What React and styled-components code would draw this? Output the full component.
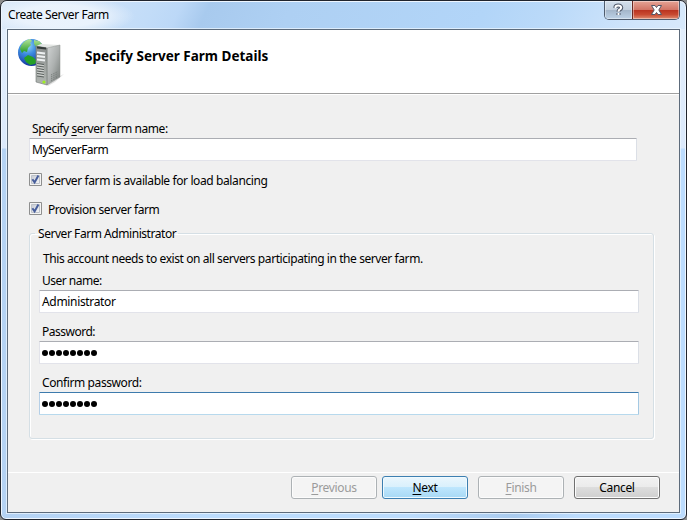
import React from "react";
import styled, { createGlobalStyle, css } from "styled-components";

const GlobalStyle = createGlobalStyle`
  *, *::before, *::after { box-sizing: border-box; }
  body { margin: 0; background: #8c8c8c; overflow: hidden; }
`;

const Window = styled.main`
  width: 687px;
  height: 520px;
  display: flex;
  flex-direction: column;
  padding: 0 6px 6px 5px;
  border: 1px solid #20242d;
  border-radius: 7px 7px 6px 6px;
  box-shadow: inset 0 0 0 1px #eef6ff;
  background:
    linear-gradient(#e4effc 0, #dbe9fb 147px, transparent 148px),
    linear-gradient(90deg, #b4d2f3, #bcdcfd 30%, #bcdcfd 60%, #aacbee 75%, #bcdcfe 84%);
  font-family: "Noto Sans", "Open Sans", sans-serif;
  font-size: 12px;
  line-height: 16px;
  color: #000;
`;

const TitleBar = styled.header`
  height: 28px;
  flex: none;
  display: flex;
  justify-content: space-between;
  margin: 0 -5px 0 -4px;
  padding: 1px 5px 0 6px;
  border-top: 1px solid #eef6ff;
  border-radius: 6px 6px 0 0;
  background:
    radial-gradient(ellipse 75px 20px at 58px 14px, rgba(238, 245, 253, 0.85) 55%, rgba(238, 245, 253, 0)),
    linear-gradient(115deg, #dbe9f9 0, #c2dcf8 22%, #bcd8f7 26%, #a8caee 30%, #aed0f3 42%, #b2d5f8 70%, #bbdaf9 80%, #cfe4fb 92%, #d8e9fb 100%);
`;

const Text = styled.span`
  white-space: nowrap;
  letter-spacing: ${(p) => p.$track || 0}px;
`;

const Title = styled(Text)`
  padding-top: 4px;
`;

const Captions = styled.div`
  display: flex;
  height: 19px;
  margin-top: -2px;
  border: 1px solid #4f5c6e;
  border-top: 0;
  border-radius: 0 0 5px 5px;
  overflow: hidden;
`;

const Caption = styled.button`
  width: ${(p) => (p.$close ? 47 : 27)}px;
  padding: 0;
  border: 0;
  display: flex;
  align-items: center;
  justify-content: center;
  box-shadow: inset 0 0 0 1px rgba(255, 255, 255, 0.4);
  background: linear-gradient(#d3dfec, #c3d0df 48%, #a3b5c9 50%, #bdd2e7);
  ${(p) => p.$close && css`
    border-left: 1px solid #6d2922;
    background: linear-gradient(#e5a496, #d27566 48%, #b9321f 50%, #c84a31 75%, #df8d72);
  `}
`;

const Client = styled.section`
  flex: 1;
  min-height: 0;
  display: flex;
  flex-direction: column;
  border: 1px solid #5d6b7b;
  outline: 1px solid rgba(240, 248, 255, 0.7);
  margin: 0 0 0 1px;
  background: #f0f0f0;
`;

const Banner = styled.div`
  height: 64px;
  flex: none;
  display: flex;
  align-items: flex-start;
  background: #fff;
  border-bottom: 1px solid #a0a0a0;
  box-shadow: 0 1px #fff;
`;

const FarmIcon = styled.svg`
  width: 48px;
  height: 50px;
  margin: 7px 0 0 9px;
`;

const Heading = styled.h1`
  margin: 17px 0 0 20px;
  font-size: 13.5px;
  line-height: 18px;
  font-weight: 700;
  white-space: nowrap;
`;

const Body = styled.div`
  flex: 1;
  display: flex;
  flex-direction: column;
  padding: 27px 25px 0 21px;
`;

const Label = styled.label`
  display: block;
  height: 16px;
  margin: 0 0 1px 3px;
  white-space: nowrap;
  letter-spacing: ${(p) => p.$track || 0}px;
`;

const Mnemonic = styled.span`
  text-decoration: underline;
  text-decoration-skip-ink: none;
  text-underline-offset: 2px;
`;

const Input = styled.div`
  width: ${(p) => p.$width}px;
  height: 23px;
  flex: none;
  display: flex;
  align-items: center;
  padding: 0 2px;
  background: #fff;
  border: 1px solid #e2e3ea;
  border-top-color: #abadb3;
  border-right-color: #dbdfe6;
  border-radius: 1px;
  ${(p) => p.$focused && css`
    border-color: #3d7bad #a4c9e3 #b7d9ed #b5cfe7;
  `}
`;

const DotRow = styled.span`
  display: flex;
  gap: 1px;
`;

const Dot = styled.i`
  width: 6px;
  height: 6px;
  border-radius: 50%;
  background: #000;
`;

const CheckRow = styled.div`
  display: flex;
  align-items: flex-start;
  gap: 6px;
  height: 16px;
  margin-top: ${(p) => p.$top}px;
`;

const CheckBox = styled.svg`
  width: 13px;
  height: 13px;
  flex: none;
`;

const Group = styled.fieldset`
  width: 625px;
  height: 214px;
  min-width: 0;
  margin: 7px 0 0;
  padding: 10px 9px 0;
  border: 1px solid #d5dfe5;
  border-radius: 3px;
  box-shadow: inset 1px 1px #fff, 1px 1px #fff;
`;

const Legend = styled.legend`
  height: 16px;
  line-height: 18px;
  padding: 0 2px 0 3px;
  margin-left: -4px;
`;

const Field = styled.div`
  margin-bottom: 11px;
`;

const Note = styled.p`
  height: 16px;
  margin: 0 0 6px 4px;
`;

const Footer = styled.footer`
  height: 40px;
  flex: none;
  display: flex;
  padding: 3px 19px 0 283px;
  border-top: 1px solid #fff;
`;

const Button = styled.button`
  width: 86px;
  height: 23px;
  margin-right: ${(p) => p.$gap || 0}px;
  flex: none;
  padding: 0;
  font: inherit;
  letter-spacing: -0.35px;
  border-radius: 3px;
  border: 1px solid #707070;
  box-shadow: inset 0 0 0 1px #fcfcfc;
  color: #000;
  background: linear-gradient(#f2f2f2, #ebebeb 49%, #dddddd 50%, #cfcfcf);
  ${(p) => p.$primary && css`
    border-color: #3c7fb1;
    box-shadow: inset 0 0 0 1px #effaff;
    background: linear-gradient(#eaf6fd, #d9f0fc 49%, #bee6fd 50%, #a7d9f5);
  `}
  ${(p) => p.disabled && css`
    border-color: #adb2b5;
    background: #f4f4f4;
    color: #9b9b9b;
  `}
`;

function ServerFarmIcon() {
  return (
    <FarmIcon viewBox="0 0 48 50">
      <defs>
        <radialGradient id="globe" cx=".35" cy=".25" r=".8">
          <stop offset="0" stopColor="#9bdcf5" />
          <stop offset=".4" stopColor="#3b8be0" />
          <stop offset="1" stopColor="#102c98" />
        </radialGradient>
        <linearGradient id="side" x1="0" y1="0" x2="1" y2="1">
          <stop offset="0" stopColor="#d2d5d5" />
          <stop offset=".5" stopColor="#adb1b0" />
          <stop offset="1" stopColor="#737976" />
        </linearGradient>
        <linearGradient id="front" x1="0" y1="0" x2="0" y2="1">
          <stop offset="0" stopColor="#8b8f8e" />
          <stop offset="1" stopColor="#b0b5b1" />
        </linearGradient>
        <linearGradient id="land" x1="0" y1="0" x2="0" y2="1">
          <stop offset="0" stopColor="#b4e49a" />
          <stop offset="1" stopColor="#249927" />
        </linearGradient>
      </defs>
      <path d="M30 48l13-9 4-2-9 8-7 4z" fill="#888" opacity=".25" />
      <circle cx="14.5" cy="15.5" r="13.5" fill="url(#globe)" />
      <path d="M3 12c1-5 5-9 10-10l2 2-2 2 1 2-3 3-1 4-3-1-2 2zM17 3l5 1 3 3-2 4-4-1-2-3z" fill="url(#land)" />
      <path d="M7 21l4-3 5 2 4 4-2 3-5 1-4-3z" fill="#25a027" />
      <path d="M19 9l5-2 19 1-12 3z" fill="#e3e6e4" />
      <path d="M30 11l13-3v32L30 48z" fill="url(#side)" stroke="#8c918f" strokeWidth=".5" />
      <path d="M19 9l11 2v37l-11-3z" fill="url(#front)" stroke="#717674" strokeWidth=".6" />
      <path d="M20 9.5l9 1v2l-9-1z" fill="#353b3a" />
      <path d="M20 15.5l8 1M20 19l8 1M20 22.5l8 1" stroke="#eef1f2" strokeWidth="2" />
      <path d="M20 26.5l7 1M20 29l7 1M20 31.5l7 1M20 34l7 1M20 36.5l7 1M20 39l7 1" stroke="#5b615f" strokeWidth="1" />
      <path d="M20 27.7l7 1M20 30.2l7 1M20 32.7l7 1M20 35.2l7 1M20 37.7l7 1" stroke="#dadddb" strokeWidth=".8" />
      <circle cx="27" cy="45" r="1.6" fill="#9df020" />
      <path d="M34 38l7-3.5M34 40l7-3.5M34 42l7-3.5M34 44l6-3.5" stroke="#717875" strokeWidth="1" strokeDasharray="1 1" />
    </FarmIcon>
  );
}

function Check() {
  return (
    <CheckBox viewBox="0 0 13 13">
      <defs>
        <linearGradient id="box" x1="0" y1="0" x2="1" y2="1">
          <stop offset="0" stopColor="#c6cad2" />
          <stop offset="1" stopColor="#f5f6f8" />
        </linearGradient>
      </defs>
      <path d="M.5.5h12v12H.5z" fill="#f4f4f4" stroke="#8e8f8f" />
      <path d="M2.5 2.5h8v8h-8z" fill="url(#box)" stroke="#bdc2ca" />
      <path d="M3.4 6.2l2.2 3.2L9.4 2.6" fill="none" stroke="#465d9b" strokeWidth="2" />
    </CheckBox>
  );
}

function Password() {
  return <DotRow>{Array.from({ length: 8 }, (_, i) => <Dot key={i} />)}</DotRow>;
}

export default function App() {
  return (
    <>
      <GlobalStyle />
      <Window>
        <TitleBar>
          <Title $track={-0.42}>Create Server Farm</Title>
          <Captions>
            <Caption aria-label="Help">
              <svg width="11" height="14" viewBox="0 0 11 14" fill="none">
                <path d="M2.5 5V3.8Q2.8 2.5 5.3 2.5T8.2 4.5Q8.2 6 6.5 6.7 5.5 7.2 5.5 8.7M5.5 10v2" stroke="#50586a" strokeWidth="4" />
                <path d="M2.5 5V3.8Q2.8 2.5 5.3 2.5T8.2 4.5Q8.2 6 6.5 6.7 5.5 7.2 5.5 8.7M5.5 10v2" stroke="#fff" strokeWidth="2" />
              </svg>
            </Caption>
            <Caption $close aria-label="Close">
              <svg width="13" height="12" viewBox="0 0 13 12">
                <path d="M1.5 1.5H5l1.5 2L8 1.5h3.5L8.8 6l2.7 4.5H8l-1.5-2-1.5 2H1.5L4.2 6z" fill="#fff" stroke="#535666" />
              </svg>
            </Caption>
          </Captions>
        </TitleBar>
        <Client>
          <Banner>
            <ServerFarmIcon />
            <Heading>Specify Server Farm Details</Heading>
          </Banner>
          <Body>
            <Label $track={-0.45}>Specify <Mnemonic>s</Mnemonic>erver farm name:</Label>
            <Input $width={608}><Text $track={-0.5}>MyServerFarm</Text></Input>
            <CheckRow $top={12}><Check /><Text $track={-0.39}>Server farm is available for load balancing</Text></CheckRow>
            <CheckRow $top={13}><Check /><Text $track={-0.43}>Provision server farm</Text></CheckRow>
            <Group>
              <Legend><Text $track={-0.45}>Server Farm Administrator</Text></Legend>
              <Note><Text $track={-0.42}>This account needs to exist on all servers participating in the server farm.</Text></Note>
              <Field><Label $track={-0.5}>User name:</Label><Input $width={600}><Text $track={-0.33}>Administrator</Text></Input></Field>
              <Field><Label $track={-0.5}>Password:</Label><Input $width={600}><Password /></Input></Field>
              <Field><Label $track={-0.4}>Confirm password:</Label><Input $width={600} $focused><Password /></Input></Field>
            </Group>
          </Body>
          <Footer>
            <Button disabled $gap={5}><Mnemonic>P</Mnemonic>revious</Button>
            <Button $primary $gap={10}><Mnemonic>N</Mnemonic>ext</Button>
            <Button disabled $gap={10}><Mnemonic>F</Mnemonic>inish</Button>
            <Button>Cancel</Button>
          </Footer>
        </Client>
      </Window>
    </>
  );
}
